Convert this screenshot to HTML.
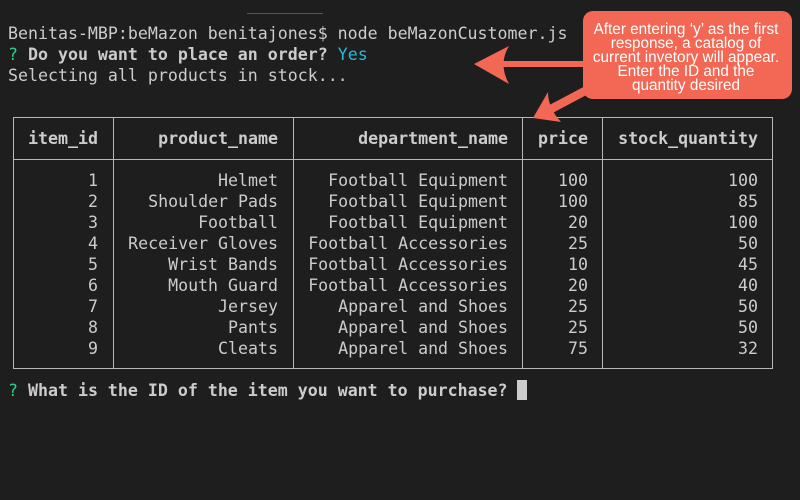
<!DOCTYPE html>
<html><head><meta charset="utf-8"><style>
body{margin:0;width:800px;height:500px;background:#1e1e1e;overflow:hidden;position:relative;font-family:"DejaVu Sans Mono","Liberation Mono",monospace;font-size:16.6px;color:#cccccc}
.l{position:absolute;left:8px;white-space:pre;line-height:21px;height:21px}
.c{position:absolute;white-space:pre;line-height:21px;text-align:right}
.b{font-weight:bold}
.h{position:absolute;background:#b8b8b8;height:1px}
.v{position:absolute;background:#b8b8b8;width:1px;top:117px;height:252px}
.g{color:#23d18b}.y{color:#29b8db}
</style></head><body>
<div style="position:absolute;left:247px;top:13px;width:76px;height:1px;background:#555"></div>
<div class="l" style="top:23px">Benitas-MBP:beMazon benitajones$ node beMazonCustomer.js</div>
<div class="l" style="top:44px"><span class="g">?</span> <span class="b">Do you want to place an order?</span> <span class="y">Yes</span></div>
<div class="l" style="top:65px">Selecting all products in stock...</div>

<div class="h" style="left:13px;width:760px;top:117px"></div>
<div class="h" style="left:13px;width:760px;top:159px"></div>
<div class="h" style="left:13px;width:760px;top:368px"></div>
<div class="v" style="left:13px"></div>
<div class="v" style="left:113px"></div>
<div class="v" style="left:293px"></div>
<div class="v" style="left:522px"></div>
<div class="v" style="left:602px"></div>
<div class="v" style="left:772px"></div>

<div id="t"></div>
<script>
var rows=[["item_id","product_name","department_name","price","stock_quantity"],
["1","Helmet","Football Equipment","100","100"],
["2","Shoulder Pads","Football Equipment","100","85"],
["3","Football","Football Equipment","20","100"],
["4","Receiver Gloves","Football Accessories","25","50"],
["5","Wrist Bands","Football Accessories","10","45"],
["6","Mouth Guard","Football Accessories","20","40"],
["7","Jersey","Apparel and Shoes","25","50"],
["8","Pants","Apparel and Shoes","25","50"],
["9","Cleats","Apparel and Shoes","75","32"]];
var rights=[98,278,508,588,758],h="";
rows.forEach(function(r,i){var top=i==0?128:170+(i-1)*21;
r.forEach(function(t,j){h+='<div class="c'+(i==0?' b':'')+'" style="top:'+top+'px;right:'+(800-rights[j])+'px">'+t+'</div>';});});
document.getElementById('t').innerHTML=h;
</script>
<div class="l" style="top:380px"><span class="g">?</span> <span class="b">What is the ID of the item you want to purchase?</span> </div>
<div style="position:absolute;left:517px;top:380px;width:10px;height:20px;background:#cccccc"></div>

<svg width="800" height="500" style="position:absolute;left:0;top:0">
<g fill="#f26855" stroke="none">
<rect x="500" y="61" width="90" height="6"/>
<path d="M474 64 L509 46 Q498 64 509 84 Z"/>
<path d="M589 84 L594 91 L545 117 L540 110 Z"/>
<path d="M533 118 L548 92 Q548 108 561 122 Z"/>
<rect x="583" y="11" width="209" height="88" rx="10"/>
</g>
<g fill="#fff" font-family="Liberation Sans, Arial, sans-serif" font-size="15.3" text-anchor="middle">
<text x="686" y="34">After entering ‘y’ as the first</text>
<text x="686" y="48">response, a catalog of</text>
<text x="686" y="62">current invetory will appear.</text>
<text x="686" y="76">Enter the ID and the</text>
<text x="686" y="90">quantity desired</text>
</g>
</svg>
</body></html>
